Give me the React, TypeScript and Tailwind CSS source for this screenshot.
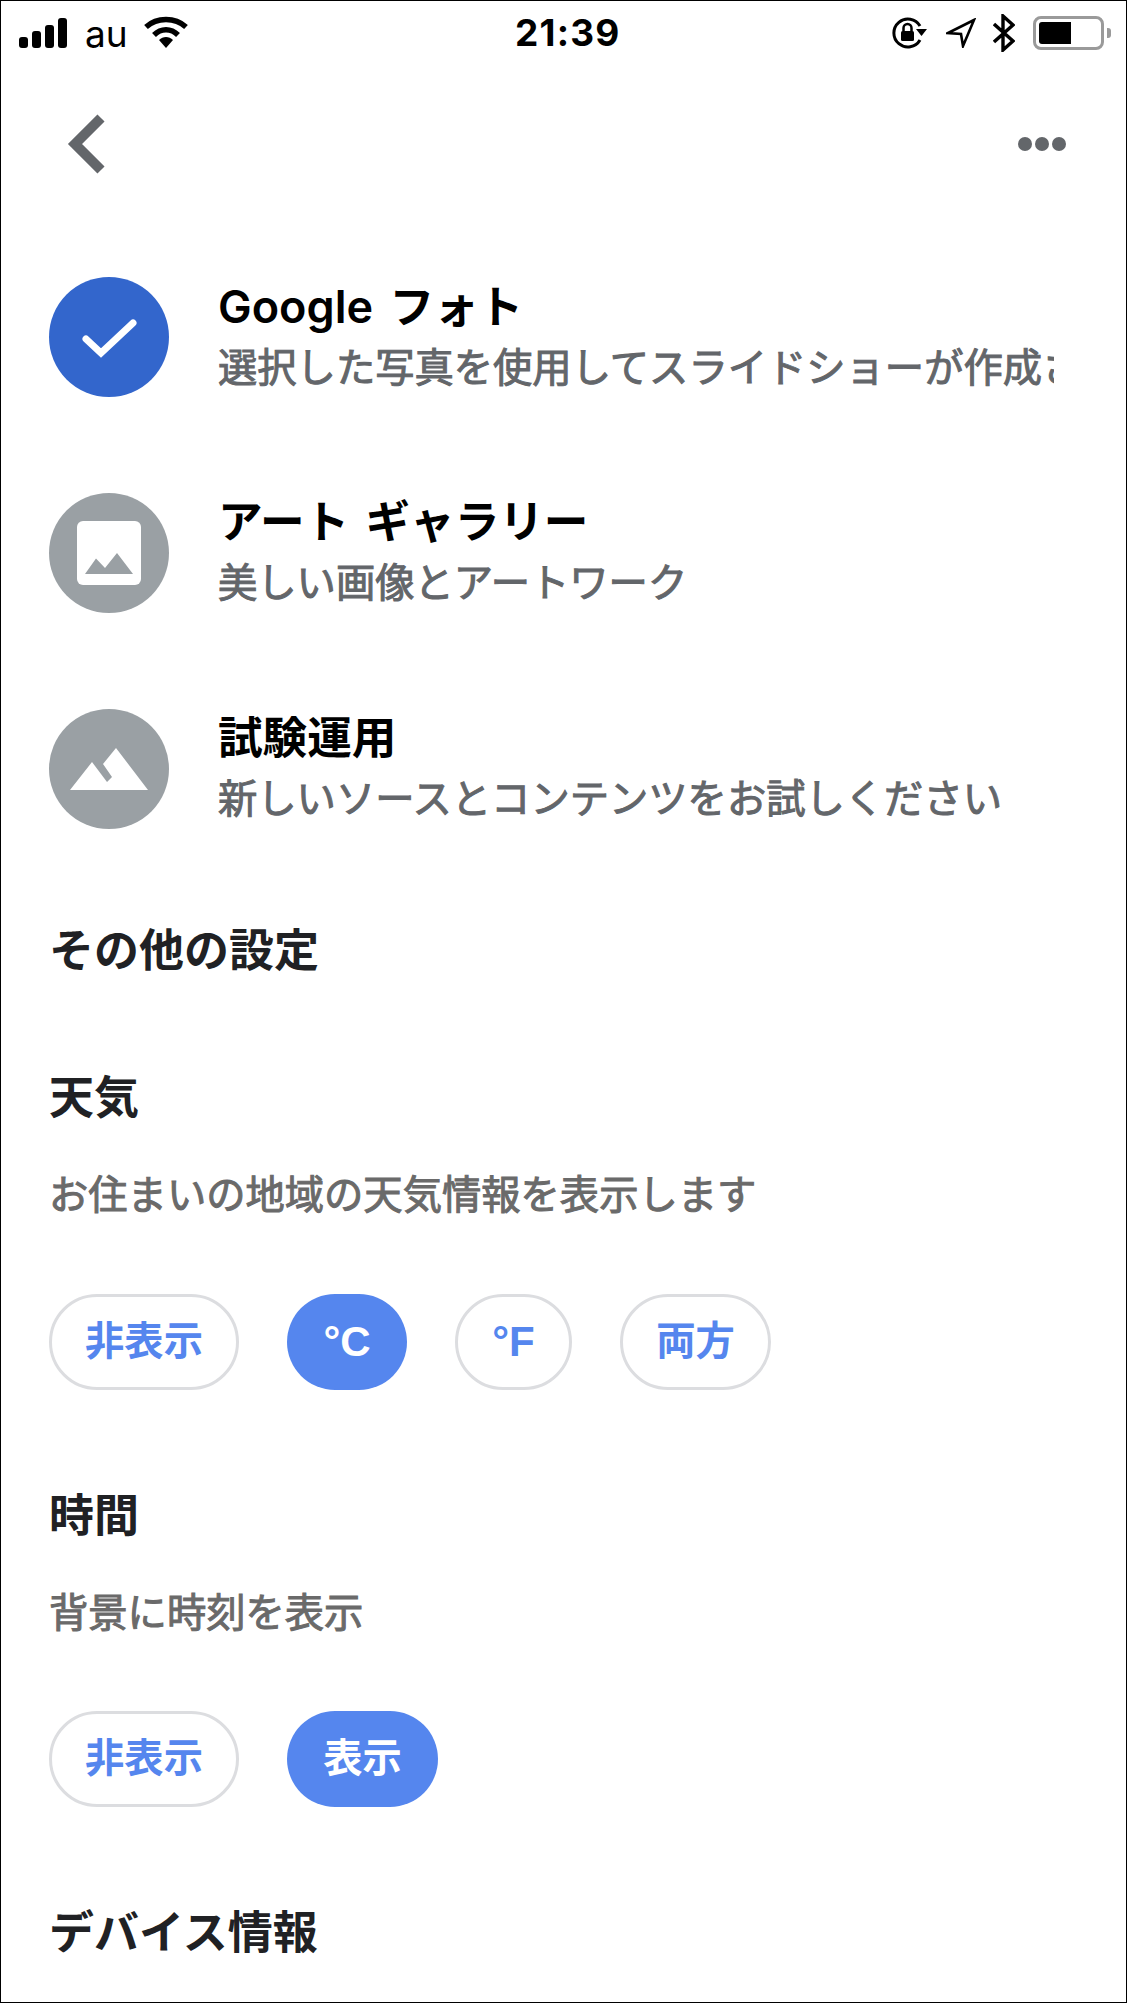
const jp = "font-['Liberation_Sans','Noto_Sans_CJK_JP',sans-serif]"
const inter = "font-['Inter',sans-serif]"

const StatusBar = () => (
  <div className="relative flex h-[64px] items-center justify-between pl-[18px] pr-[15px]">
    <div className="flex items-center">
      <svg width="48" height="30" viewBox="0 0 48 30" className="mb-[1px]">
        <rect x="0" y="19" width="9" height="11" rx="3" />
        <rect x="13" y="13" width="9" height="17" rx="3" />
        <rect x="26" y="7" width="9" height="23" rx="3" />
        <rect x="39" y="0" width="9" height="30" rx="3" />
      </svg>
      <span className={`ml-[18px] text-[37px] leading-none text-black ${inter}`}>au</span>
      <svg width="44" height="32" viewBox="0 0 44 32" className="mb-[2px] ml-[16px]">
        <path d="M2 11 C13 1 31 1 42 11" fill="none" stroke="#000" strokeWidth="5.5" />
        <path d="M10 19 C17 12 27 12 34 19" fill="none" stroke="#000" strokeWidth="5.5" />
        <path d="M15 24 C19 20 25 20 29 24 L22 32 Z" />
      </svg>
    </div>
    <span className={`absolute left-[514px] top-[14px] text-[37px] font-bold leading-[36px] tracking-[1.2px] text-black ${inter}`}>21:39</span>
    <div className="flex items-center">
      <svg width="36" height="32" viewBox="0 0 36 32">
        <path d="M28 9 A14 14 0 1 0 28 23" fill="none" stroke="#000" strokeWidth="3" />
        <path d="M24 12 L35 12 L29.5 19 Z" />
        <rect x="9" y="14" width="13" height="10" rx="1.5" />
        <path d="M11.5 14 V11 A4 4 0 0 1 19.5 11 V14" fill="none" stroke="#000" strokeWidth="2.5" />
      </svg>
      <svg width="30" height="30" viewBox="0 0 30 30" className="ml-[18px]">
        <path d="M28 2 L2 15 L15 16 L17 28 Z" fill="none" stroke="#000" strokeWidth="2.6" strokeLinejoin="miter" />
      </svg>
      <svg width="22" height="38" viewBox="0 0 22 38" className="ml-[17px]">
        <path d="M1 10 L20 27 L10 36 V2 L20 11 L1 28" fill="none" stroke="#000" strokeWidth="3.4" />
      </svg>
      <div className="ml-[18px] flex h-[34px] w-[71px] items-center rounded-[8px] border-[3px] border-[#9a9a9a] pl-[3px]">
        <div className="h-[22px] w-[32px] rounded-l-[3px] bg-black" />
      </div>
      <div className="ml-[3px] h-[10px] w-[4px] rounded-r-[3px] bg-[#9a9a9a]" />
    </div>
  </div>
)

const Source = ({ icon, bg, title, sub }: { icon: React.ReactNode; bg: string; title: React.ReactNode; sub: string }) => (
  <div className="flex h-[120px] items-center">
    <div className={`flex h-[120px] w-[120px] shrink-0 items-center justify-center rounded-full ${bg}`}>{icon}</div>
    <div className="ml-[49px] w-[836px] overflow-hidden">
      <div className="whitespace-nowrap text-[44.6px] font-bold leading-[60px] text-black [word-spacing:4px]">{title}</div>
      <div className="whitespace-nowrap text-[39.3px] leading-[60px] text-[#63666a] [-webkit-text-stroke:1px]">{sub}</div>
    </div>
  </div>
)

const Pill = ({ label, active, w, latin }: { label: string; active?: boolean; w: string; latin?: boolean }) => (
  <div
    className={`flex h-[96px] items-center justify-center rounded-full font-bold leading-none ${latin ? "text-[42px]" : "text-[39.3px]"} ${w} ${
      active ? "bg-[#5586ee] text-white" : "border-[3px] border-[#dcdde0] text-[#5586ee]"
    }`}
  >
    {label}
  </div>
)

const Heading = ({ className, children }: { className: string; children: string }) => (
  <div className={`text-[45px] font-bold leading-[60px] text-[#202124] ${className}`}>{children}</div>
)

const Hint = ({ children }: { children: string }) => (
  <div className="mt-[36px] text-[39.3px] leading-[60px] text-[#6a6a6a] [-webkit-text-stroke:1px]">{children}</div>
)

export default function App() {
  return (
    <div className={`h-[2003px] w-[1127px] overflow-hidden border border-black bg-white ${jp}`}>
      <StatusBar />
      <div className="flex h-[212px] items-start justify-between pl-[66px] pr-[60px] pt-[48px]">
        <svg width="38" height="62" viewBox="0 0 38 62">
          <path d="M34 5 L8 31 L34 57" fill="none" stroke="#63666a" strokeWidth="10" />
        </svg>
        <svg width="48" height="14" viewBox="0 0 48 14" className="mt-[24px]">
          <circle cx="7" cy="7" r="7" fill="#63666a" />
          <circle cx="24" cy="7" r="7" fill="#63666a" />
          <circle cx="41" cy="7" r="7" fill="#63666a" />
        </svg>
      </div>

      <div className="pl-[48px]">
        <div className="flex flex-col gap-[96px]">
          <Source
            bg="bg-[#3366cc]"
            title={
              <>
                <span className={`text-[45px] font-semibold ${inter}`}>Google</span> フォト
              </>
            }
            sub="選択した写真を使用してスライドショーが作成されます"
            icon={
              <svg width="56" height="44" viewBox="0 0 56 44">
                <path d="M5 24 L20 38 L52 8" fill="none" stroke="#fff" strokeWidth="7" strokeLinecap="round" strokeLinejoin="miter" />
              </svg>
            }
          />
          <Source
            bg="bg-[#9aa0a4]"
            title="アート ギャラリー"
            sub="美しい画像とアートワーク"
            icon={
              <svg width="64" height="64" viewBox="0 0 64 64">
                <rect width="64" height="64" rx="6" fill="#fff" />
                <path d="M8 53 L19 37.5 L28 47 L40 32 L56 53 Z" fill="#9aa0a4" />
              </svg>
            }
          />
          <Source
            bg="bg-[#9aa0a4]"
            title="試験運用"
            sub="新しいソースとコンテンツをお試しください"
            icon={
              <svg width="78" height="42" viewBox="0 0 78 42">
                <path d="M0 42 L22 14 L37 34 L42 29 L33 16 L46 0 L78 42 Z" fill="#fff" />
              </svg>
            }
          />
        </div>

        <Heading className="mt-[93px]">その他の設定</Heading>

        <Heading className="mt-[87px]">天気</Heading>
        <Hint>お住まいの地域の天気情報を表示します</Hint>
        <div className="mt-[69px] flex gap-[48px]">
          <Pill label="非表示" w="w-[190px]" />
          <Pill label="°C" active latin w="w-[120px]" />
          <Pill label="°F" latin w="w-[117px]" />
          <Pill label="両方" w="w-[151px]" />
        </div>

        <Heading className="mt-[97px]">時間</Heading>
        <Hint>背景に時刻を表示</Hint>
        <div className="mt-[68px] flex gap-[48px]">
          <Pill label="非表示" w="w-[190px]" />
          <Pill label="表示" active w="w-[151px]" />
        </div>

        <Heading className="mt-[97px]">デバイス情報</Heading>
      </div>
    </div>
  )
}
